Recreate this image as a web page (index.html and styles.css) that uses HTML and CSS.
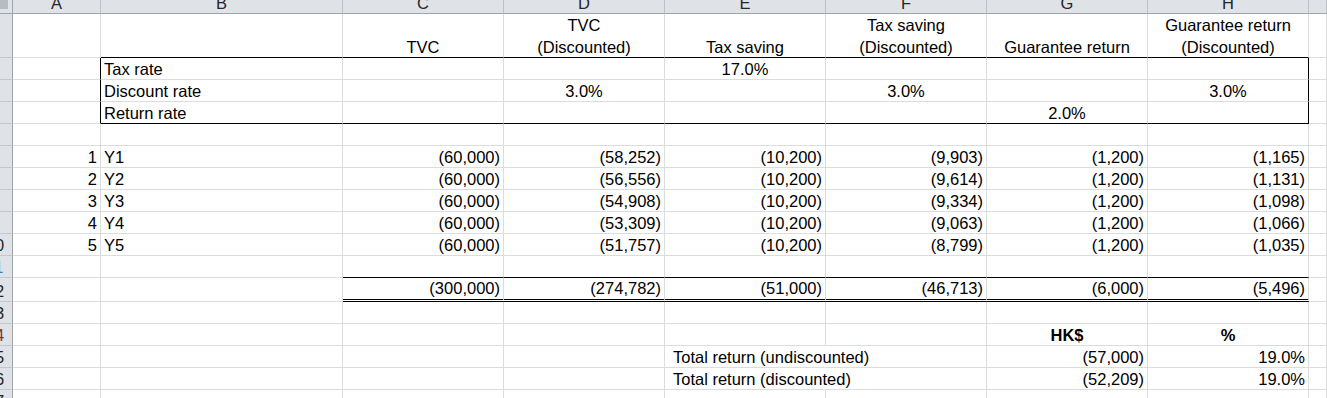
FILE: index.html
```html
<!DOCTYPE html>
<html lang="en">
<head>
<meta charset="utf-8">
<title>TVC analysis</title>
<link rel="stylesheet" href="styles.css">
</head>
<body>
<div class="sheet">
  <div class="row row-colhdr">
    <div class="ch corner"><div class="corner-mark"></div></div>
    <div class="ch">A</div><div class="ch">B</div><div class="ch">C</div><div class="ch">D</div>
    <div class="ch">E</div><div class="ch">F</div><div class="ch">G</div><div class="ch">H</div><div class="ch"></div>
  </div>

  <div class="row row-tall">
    <div class="rh"><span>1</span></div>
    <div class="c"></div>
    <div class="c bb"></div>
    <div class="c ctr bb">TVC</div>
    <div class="c wrap bb"><span>TVC</span><span>(Discounted)</span></div>
    <div class="c ctr bb">Tax saving</div>
    <div class="c wrap bb"><span>Tax saving</span><span>(Discounted)</span></div>
    <div class="c ctr bb">Guarantee return</div>
    <div class="c wrap bb"><span>Guarantee return</span><span>(Discounted)</span></div>
    <div class="c"></div>
  </div>

  <div class="row">
    <div class="rh"><span>2</span></div>
    <div class="c br"></div>
    <div class="c">Tax rate</div>
    <div class="c"></div><div class="c"></div>
    <div class="c ctr">17.0%</div>
    <div class="c"></div><div class="c"></div>
    <div class="c br"></div>
    <div class="c"></div>
  </div>

  <div class="row">
    <div class="rh"><span>3</span></div>
    <div class="c br"></div>
    <div class="c">Discount rate</div>
    <div class="c"></div>
    <div class="c ctr">3.0%</div>
    <div class="c"></div>
    <div class="c ctr">3.0%</div>
    <div class="c"></div>
    <div class="c ctr br">3.0%</div>
    <div class="c"></div>
  </div>

  <div class="row">
    <div class="rh"><span>4</span></div>
    <div class="c br"></div>
    <div class="c bb">Return rate</div>
    <div class="c bb"></div><div class="c bb"></div><div class="c bb"></div><div class="c bb"></div>
    <div class="c ctr bb">2.0%</div>
    <div class="c bb br"></div>
    <div class="c"></div>
  </div>

  <div class="row">
    <div class="rh"><span>5</span></div>
    <div class="c"></div><div class="c"></div><div class="c"></div><div class="c"></div><div class="c"></div>
    <div class="c"></div><div class="c"></div><div class="c"></div><div class="c"></div>
  </div>

  <div class="row">
    <div class="rh"><span>6</span></div>
    <div class="c num">1</div><div class="c">Y1</div>
    <div class="c num">(60,000)</div><div class="c num">(58,252)</div><div class="c num">(10,200)</div>
    <div class="c num">(9,903)</div><div class="c num">(1,200)</div><div class="c num">(1,165)</div>
    <div class="c"></div>
  </div>

  <div class="row">
    <div class="rh"><span>7</span></div>
    <div class="c num">2</div><div class="c">Y2</div>
    <div class="c num">(60,000)</div><div class="c num">(56,556)</div><div class="c num">(10,200)</div>
    <div class="c num">(9,614)</div><div class="c num">(1,200)</div><div class="c num">(1,131)</div>
    <div class="c"></div>
  </div>

  <div class="row">
    <div class="rh"><span>8</span></div>
    <div class="c num">3</div><div class="c">Y3</div>
    <div class="c num">(60,000)</div><div class="c num">(54,908)</div><div class="c num">(10,200)</div>
    <div class="c num">(9,334)</div><div class="c num">(1,200)</div><div class="c num">(1,098)</div>
    <div class="c"></div>
  </div>

  <div class="row">
    <div class="rh"><span>9</span></div>
    <div class="c num">4</div><div class="c">Y4</div>
    <div class="c num">(60,000)</div><div class="c num">(53,309)</div><div class="c num">(10,200)</div>
    <div class="c num">(9,063)</div><div class="c num">(1,200)</div><div class="c num">(1,066)</div>
    <div class="c"></div>
  </div>

  <div class="row">
    <div class="rh"><span>10</span></div>
    <div class="c num">5</div><div class="c">Y5</div>
    <div class="c num">(60,000)</div><div class="c num">(51,757)</div><div class="c num">(10,200)</div>
    <div class="c num">(8,799)</div><div class="c num">(1,200)</div><div class="c num">(1,035)</div>
    <div class="c"></div>
  </div>

  <div class="row">
    <div class="rh rh-sel"><span>11</span></div>
    <div class="c"></div><div class="c"></div>
    <div class="c bb"></div><div class="c bb"></div><div class="c bb"></div>
    <div class="c bb"></div><div class="c bb"></div><div class="c bb"></div>
    <div class="c"></div>
  </div>

  <div class="row row-total">
    <div class="rh"><span>12</span></div>
    <div class="c"></div><div class="c"></div>
    <div class="c num dbl">(300,000)</div><div class="c num dbl">(274,782)</div><div class="c num dbl">(51,000)</div>
    <div class="c num dbl">(46,713)</div><div class="c num dbl">(6,000)</div><div class="c num dbl">(5,496)</div>
    <div class="c"></div>
  </div>

  <div class="row">
    <div class="rh"><span>13</span></div>
    <div class="c"></div><div class="c"></div><div class="c"></div><div class="c"></div><div class="c"></div>
    <div class="c"></div><div class="c"></div><div class="c"></div><div class="c"></div>
  </div>

  <div class="row">
    <div class="rh rh-mark"><span>14</span></div>
    <div class="c"></div><div class="c"></div><div class="c"></div><div class="c"></div><div class="c"></div>
    <div class="c"></div>
    <div class="c ctr bold">HK$</div>
    <div class="c ctr bold">%</div>
    <div class="c"></div>
  </div>

  <div class="row">
    <div class="rh"><span>15</span></div>
    <div class="c"></div><div class="c"></div><div class="c"></div><div class="c"></div>
    <div class="c indent spill">Total return (undiscounted)</div>
    <div class="c"></div>
    <div class="c num">(57,000)</div>
    <div class="c num">19.0%</div>
    <div class="c"></div>
  </div>

  <div class="row">
    <div class="rh"><span>16</span></div>
    <div class="c"></div><div class="c"></div><div class="c"></div><div class="c"></div>
    <div class="c indent spill">Total return (discounted)</div>
    <div class="c"></div>
    <div class="c num">(52,209)</div>
    <div class="c num">19.0%</div>
    <div class="c"></div>
  </div>

  <div class="row">
    <div class="rh"><span>17</span></div>
    <div class="c"></div><div class="c"></div><div class="c"></div><div class="c"></div><div class="c"></div>
    <div class="c"></div><div class="c"></div><div class="c"></div><div class="c"></div>
  </div>
</div>
</body>
</html>
```

FILE: styles.css
```css
html, body {
  margin: 0;
  padding: 0;
  background: #ffffff;
  overflow: hidden;
}

.sheet {
  width: 1327px;
  height: 398px;
  overflow: hidden;
  font-family: "Liberation Sans", Arial, sans-serif;
  font-size: 16.5px;
  color: #000;
}

.row {
  display: grid;
  grid-template-columns: 13px 88px 242px repeat(6, 161px) 1fr;
  height: 22px;
}

.row-colhdr { height: 14px; }
.row-tall { height: 44px; }
.row-total { height: 24px; }

/* column header */
.ch {
  box-sizing: border-box;
  background: #dfe3e8;
  border-right: 1px solid #bcc1c7;
  border-bottom: 1px solid #9fa4ab;
  display: flex;
  justify-content: center;
  align-items: flex-end;
  padding-bottom: 1px;
  line-height: 18px;
  overflow: hidden;
  color: #262626;
  white-space: nowrap;
}

.corner {
  display: block;
  padding: 0;
  border-right-color: #9fa4ab;
}

.corner-mark {
  width: 8px;
  height: 9px;
  background: #b7bcc2;
}

/* row header */
.rh {
  box-sizing: border-box;
  background: #dfe3e8;
  border-right: 1px solid #9fa4ab;
  border-bottom: 1px solid #c4c8cd;
  display: flex;
  align-items: flex-end;
  padding-bottom: 1px;
  line-height: 18px;
  overflow: hidden;
  color: #262626;
}

.rh span {
  flex: none;
  width: 26px;
  margin-left: -18px;
  text-align: center;
}

.rh-sel { color: #3f7cc4; }
.rh-mark { color: #7d3434; }

/* cells */
.c {
  box-sizing: border-box;
  border-right: 1px solid #dadcdd;
  border-bottom: 1px solid #dadcdd;
  display: flex;
  align-items: flex-end;
  padding: 0 3px 1px 3px;
  line-height: 18px;
  white-space: nowrap;
  min-width: 0;
}

.num { justify-content: flex-end; }
.ctr { justify-content: center; }
.bold { font-weight: bold; }
.indent { padding-left: 8px; }

.wrap {
  flex-direction: column;
  justify-content: flex-end;
  align-items: center;
  gap: 4px;
}

.bb { border-bottom-color: #000; }
.br { border-right-color: #000; }

.dbl {
  border-bottom: 3px double #000;
  padding-bottom: 2px;
}

.spill {
  overflow: visible;
  border-right-color: #ffffff;
}
```
